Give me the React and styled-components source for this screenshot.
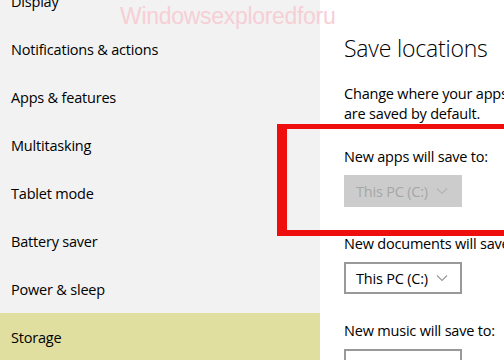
import styled, { createGlobalStyle } from "styled-components";

const GlobalStyle = createGlobalStyle`
  html, body {
    margin: 0;
    padding: 0;
    width: 504px;
    height: 360px;
    overflow: hidden;
    background: #ffffff;
  }
  * { box-sizing: border-box; }
`;

const menuItems = [
  "Display",
  "Notifications & actions",
  "Apps & features",
  "Multitasking",
  "Tablet mode",
  "Battery saver",
  "Power & sleep",
  "Storage",
];

const locations = [
  { label: "New apps will save to:", disabled: true },
  { label: "New documents will save to:" },
  { label: "New music will save to:" },
];

function Chevron({ color }) {
  return (
    <svg width="12" height="8" viewBox="0 0 12 8">
      <path d="M1 1.5 L6 6.5 L11 1.5" fill="none" stroke={color} strokeWidth="1.2" />
    </svg>
  );
}

function App() {
  return (
    <Page>
      <GlobalStyle />
      <Sidebar>
        {menuItems.map((item) => (
          <MenuItem key={item} active={item === "Storage"}>
            {item}
          </MenuItem>
        ))}
      </Sidebar>
      <Content>
        <Heading>Save locations</Heading>
        <Description>
          Change where your apps, documents, music, pictures and videos
          <br />
          are saved by default.
        </Description>
        {locations.map((loc) => (
          <Group key={loc.label}>
            <Label>{loc.label}</Label>
            <Dropdown disabled={loc.disabled}>
              <span>This PC (C:)</span>
              <Chevron color={loc.disabled ? "#b4b4b4" : "#9a9a9a"} />
            </Dropdown>
          </Group>
        ))}
      </Content>
      <Watermark>Windowsexploredforu</Watermark>
      <Highlight />
    </Page>
  );
}

const Page = styled.div`
  position: relative;
  display: flex;
  width: 504px;
  height: 360px;
  overflow: hidden;
  font-family: "Open Sans", "Noto Sans", sans-serif;
  color: #000;
`;

const Sidebar = styled.div`
  flex: 0 0 320px;
  background: #f2f2f2;
  display: flex;
  flex-direction: column;
  margin-top: -23px;
`;

const MenuItem = styled.div`
  height: 48px;
  flex: 0 0 48px;
  display: flex;
  align-items: center;
  padding-left: 11px;
  font-size: 14.5px;
  letter-spacing: -0.2px;
  background: ${(p) => (p.active ? "#e0df9f" : "transparent")};
`;

const Content = styled.div`
  flex: 1;
  padding: 33px 0 0 24px;
  white-space: nowrap;
  overflow: hidden;
`;

const Heading = styled.div`
  font-size: 23px;
  font-weight: 300;
  line-height: 30px;
  letter-spacing: -0.2px;
`;

const Description = styled.div`
  margin-top: 21px;
  font-size: 14.5px;
  line-height: 20px;
  letter-spacing: -0.2px;
`;

const Group = styled.div`
  margin-top: 23px;
  & + & {
    margin-top: 27px;
  }
`;

const Label = styled.div`
  font-size: 14.5px;
  line-height: 20px;
  letter-spacing: -0.2px;
`;

const Dropdown = styled.div`
  margin-top: 8px;
  width: 118px;
  height: 32px;
  display: flex;
  align-items: center;
  justify-content: space-between;
  padding: 0 12px 0 10px;
  font-size: 14.5px;
  letter-spacing: -0.2px;
  border: 2px solid ${(p) => (p.disabled ? "#cccccc" : "#999999")};
  background: ${(p) => (p.disabled ? "#cccccc" : "#ffffff")};
  color: ${(p) => (p.disabled ? "#a6a6a6" : "#000000")};
`;

const Watermark = styled.div`
  position: absolute;
  left: 120px;
  top: 3px;
  font-family: "Liberation Sans", Arial, sans-serif;
  font-size: 23px;
  letter-spacing: -0.3px;
  color: #f6cfd5;
  pointer-events: none;
`;

const Highlight = styled.div`
  position: absolute;
  left: 277px;
  top: 124px;
  width: 260px;
  height: 112px;
  border-top: 5px solid #ee0e0e;
  border-left: 10px solid #ee0e0e;
  border-bottom: 6px solid #ee0e0e;
  pointer-events: none;
`;

export default App;
